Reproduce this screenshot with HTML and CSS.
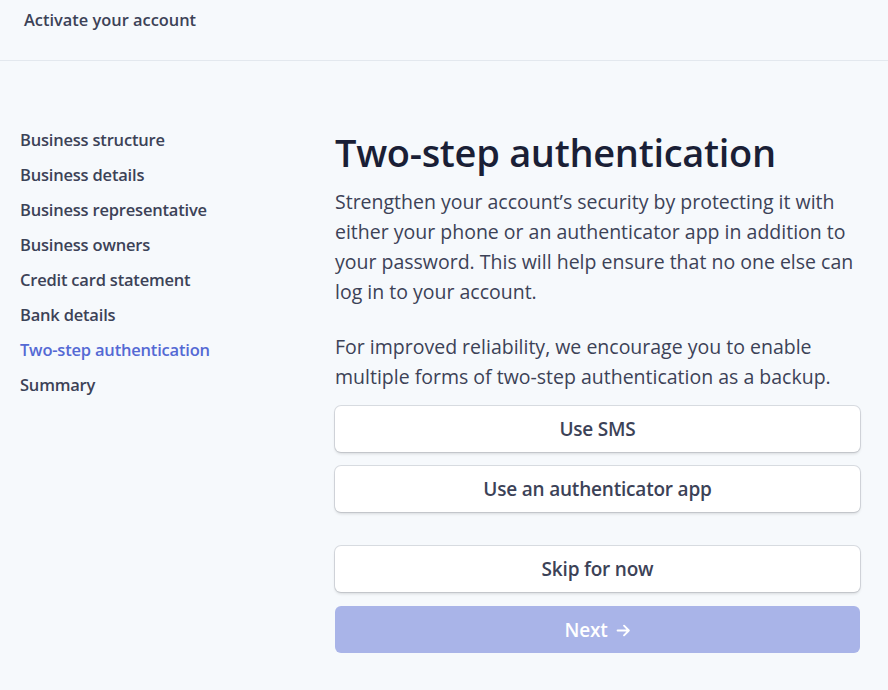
FILE: index.html
```html
<!DOCTYPE html>
<html lang="en">
<head>
    <meta charset="UTF-8">
    <meta name="viewport" content="width=device-width, initial-scale=1.0">
    <title>Activate your account</title>
    <link rel="stylesheet" href="styles.css">
</head>
<body>

    <header class="top-bar">
        <span class="top-title">Activate your account</span>
    </header>

    <div class="page">
        <!-- Steps of the activation flow -->
        <nav class="steps">
            <a class="step">Business structure</a>
            <a class="step">Business details</a>
            <a class="step">Business representative</a>
            <a class="step">Business owners</a>
            <a class="step">Credit card statement</a>
            <a class="step">Bank details</a>
            <a class="step active">Two-step authentication</a>
            <a class="step">Summary</a>
        </nav>

        <main class="content">
            <h1 class="title">Two-step authentication</h1>
            <p class="text">Strengthen your account’s security by protecting it with either your phone or an authenticator app in addition to your password. This will help ensure that no one else can log in to your account.</p>
            <p class="text">For improved reliability, we encourage you to enable multiple forms of two-step authentication as a backup.</p>

            <div class="options">
                <button type="button" class="btn">Use SMS</button>
                <button type="button" class="btn">Use an authenticator app</button>
            </div>

            <div class="actions">
                <button type="button" class="btn">Skip for now</button>
                <button type="button" class="btn btn-primary" disabled>
                    Next
                    <svg class="arrow" width="15" height="15" viewBox="0 0 14 14" fill="none" stroke="currentColor" stroke-width="1.8" stroke-linecap="round" stroke-linejoin="round">
                        <path d="M1.5 7h10.5M7.5 2.5 12 7l-4.5 4.5"/>
                    </svg>
                </button>
            </div>
        </main>
    </div>

</body>
</html>
```

FILE: styles.css
```css
body {
    font-family: 'Open Sans', 'Noto Sans', sans-serif;
    margin: 0;
    padding: 0;
    background-color: #f6f9fc;
    color: #3c4257;
}

/* Header */
.top-bar {
    height: 61px;
    box-sizing: border-box;
    border-bottom: 1px solid #e3e8ee;
    padding: 8px 24px 0;
}

.top-title {
    font-size: 16.4px;
    font-weight: 600;
    color: #3c4257;
}

/* Page layout */
.page {
    display: flex;
    padding: 61px 28px 0 20px;
}

.steps {
    width: 315px;
    flex-shrink: 0;
    display: flex;
    flex-direction: column;
}

.step {
    font-size: 16.5px;
    font-weight: 600;
    line-height: 35px;
    color: #3c4257;
    letter-spacing: -0.2px;
}

.step.active {
    color: #5469d4;
}

.content {
    flex: 1;
    padding-top: 5px;
}

.title {
    font-size: 38px;
    font-weight: 600;
    color: #1a1f36;
    margin: 0 0 10px;
    line-height: 50px;
    letter-spacing: -0.3px;
}

.text {
    font-size: 19.5px;
    line-height: 30px;
    color: #3c4257;
    margin: 0 0 25px;
}

.options,
.actions {
    display: flex;
    flex-direction: column;
    gap: 14px;
}

.options {
    margin-top: -11px;
}

.actions {
    margin-top: 34px;
}

.btn {
    height: 46px;
    border: none;
    border-radius: 6px;
    background-color: #fff;
    box-shadow: 0 0 0 1px rgba(60, 66, 87, 0.16), 0 2px 3px rgba(0, 0, 0, 0.12);
    font-family: inherit;
    font-size: 19px;
    font-weight: 600;
    color: #3c4257;
    cursor: pointer;
    letter-spacing: -0.2px;
}

.btn-primary {
    height: 47px;
    background-color: #a9b4e8;
    color: #fff;
    box-shadow: none;
    display: flex;
    align-items: center;
    justify-content: center;
    gap: 8px;
}

.arrow {
    margin-top: 1px;
}
```
